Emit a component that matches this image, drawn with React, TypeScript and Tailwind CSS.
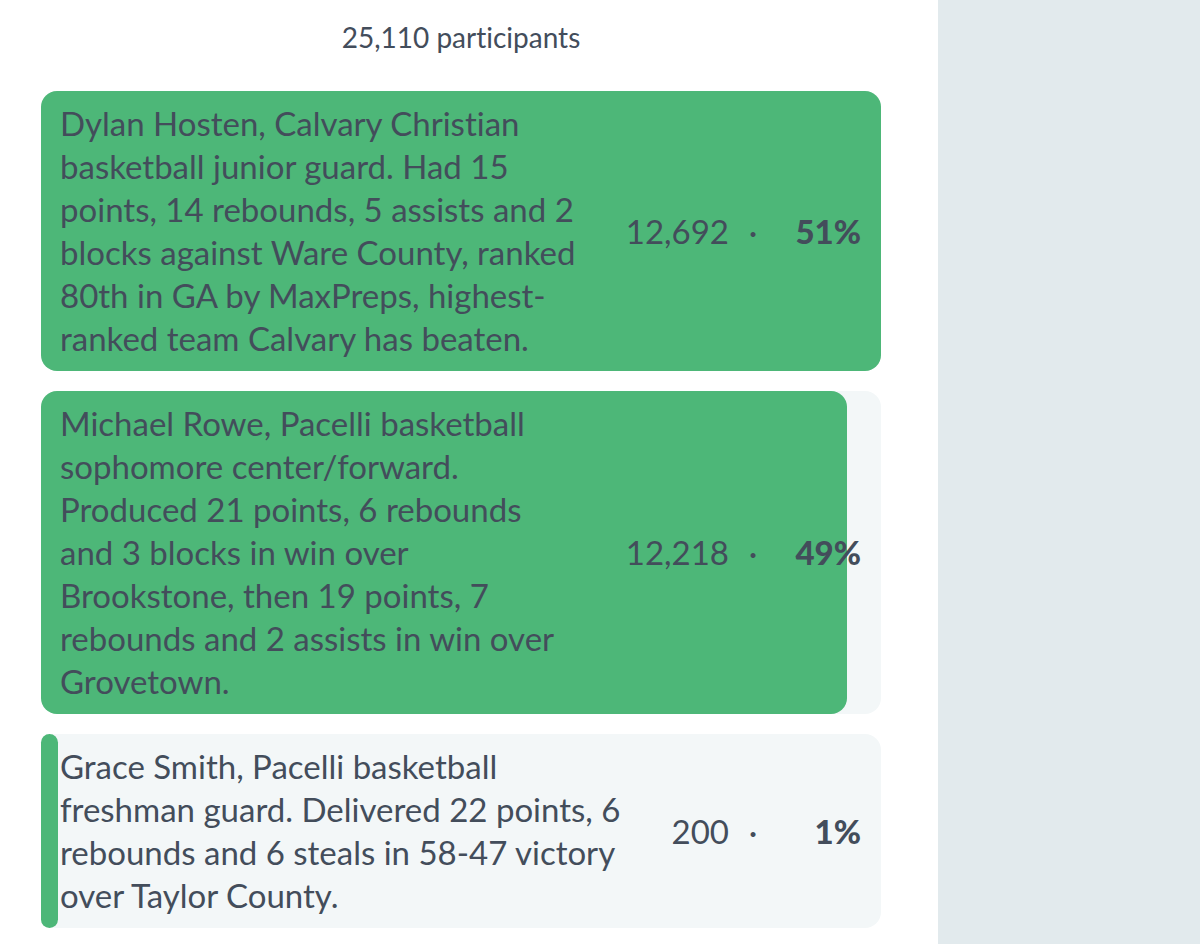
import React from 'react';

interface PollOption {
  lines: string[];
  votes: string;
  percent: number;
  fill: number;
}

const options: PollOption[] = [
  {
    lines: [
      'Dylan Hosten, Calvary Christian',
      'basketball junior guard. Had 15',
      'points, 14 rebounds, 5 assists and 2',
      'blocks against Ware County, ranked',
      '80th in GA by MaxPreps, highest-',
      'ranked team Calvary has beaten.',
    ],
    votes: '12,692',
    percent: 51,
    fill: 100,
  },
  {
    lines: [
      'Michael Rowe, Pacelli basketball',
      'sophomore center/forward.',
      'Produced 21 points, 6 rebounds',
      'and 3 blocks in win over',
      'Brookstone, then 19 points, 7',
      'rebounds and 2 assists in win over',
      'Grovetown.',
    ],
    votes: '12,218',
    percent: 49,
    fill: 96,
  },
  {
    lines: [
      'Grace Smith, Pacelli basketball',
      'freshman guard. Delivered 22 points, 6',
      'rebounds and 6 steals in 58-47 victory',
      'over Taylor County.',
    ],
    votes: '200',
    percent: 1,
    fill: 2,
  },
];

const PollRow: React.FC<{ option: PollOption }> = ({ option }) => (
  <li className="relative flex items-center justify-between rounded-2xl bg-[#f3f7f8] py-[11px] pr-5 pl-[19px]">
    {/* Share of the vote, drawn behind the text */}
    <div
      className="absolute inset-y-0 left-0 rounded-2xl bg-[#4db778]"
      style={{ width: `${option.fill}%` }}
    />
    <p className="relative">
      {option.lines.map((line) => (
        <span key={line} className="block whitespace-nowrap">{line}</span>
      ))}
    </p>
    <div className="relative flex items-center whitespace-nowrap">
      <span>{option.votes}</span>
      <span className="w-12 text-center">·</span>
      <strong className="w-21 text-right font-black">{option.percent}%</strong>
    </div>
  </li>
);

const App: React.FC = () => (
  <div className="flex min-h-screen bg-[#e2eaed] font-['Lato',sans-serif] text-[#434d5b] [font-variant-ligatures:none]">
    <main className="flex-1 bg-white pt-[15px] pr-[57px] pl-[41px]">
      <h2 className="text-center text-[28px] leading-[44px]">25,110 participants</h2>
      <ul className="mt-8 flex flex-col gap-5 text-[33px] leading-[43px]">
        {options.map((option) => (
          <PollRow key={option.votes} option={option} />
        ))}
      </ul>
    </main>
    <aside className="w-[262px] shrink-0" />
  </div>
);

export default App;
